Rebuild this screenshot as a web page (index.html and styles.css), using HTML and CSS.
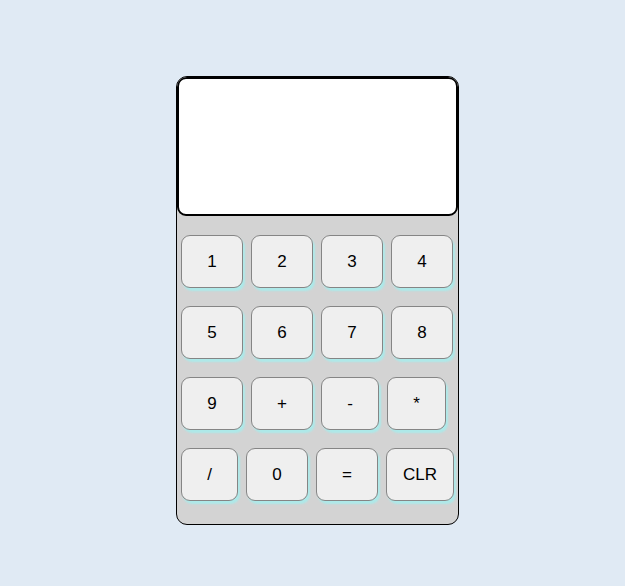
FILE: index.html
```html
<!DOCTYPE html>
<html>
<head>
<meta charset="utf-8">
<link rel="stylesheet" href="styles.css">
</head>
<body>
<div class="calc">
  <div class="display"></div>
  <div class="keys">
    <div class="row">
      <button class="key">1</button>
      <button class="key">2</button>
      <button class="key">3</button>
      <button class="key">4</button>
    </div>
    <div class="row">
      <button class="key">5</button>
      <button class="key">6</button>
      <button class="key">7</button>
      <button class="key">8</button>
    </div>
    <div class="row">
      <button class="key">9</button>
      <button class="key">+</button>
      <button class="key key-s">-</button>
      <button class="key key-m">*</button>
    </div>
    <div class="row">
      <button class="key key-xs">/</button>
      <button class="key">0</button>
      <button class="key">=</button>
      <button class="key key-l">CLR</button>
    </div>
  </div>
</div>
</body>
</html>
```
FILE: styles.css
```css
html, body {
  margin: 0;
  padding: 0;
  background: #e0eaf4;
  font-family: "Liberation Sans", Arial, sans-serif;
}
body {
  padding-top: 76px;
  padding-left: 176px;
}
.calc {
  width: 281px;
  height: 447px;
  border: 1px solid #000;
  border-radius: 11px;
  background: #d3d3d3;
  overflow: hidden;
}
.display {
  height: 135px;
  background: #fff;
  border: 2px solid #000;
  border-radius: 9px;
}
.keys {
  display: flex;
  flex-direction: column;
  gap: 18px;
  padding: 19px 0 0 4px;
}
.row {
  display: flex;
  gap: 8px;
}
.key {
  width: 62px;
  height: 53px;
  margin: 0;
  padding: 0;
  background: #efefef;
  border: 1px solid #858585;
  border-radius: 9px;
  box-shadow: 2px 3px 2px #ade9e9;
  font-family: "Liberation Sans", Arial, sans-serif;
  font-size: 17px;
  color: #000;
}
.key-s { width: 58px; }
.key-m { width: 59px; }
.key-xs { width: 57px; }
.key-l { width: 68px; }
```
